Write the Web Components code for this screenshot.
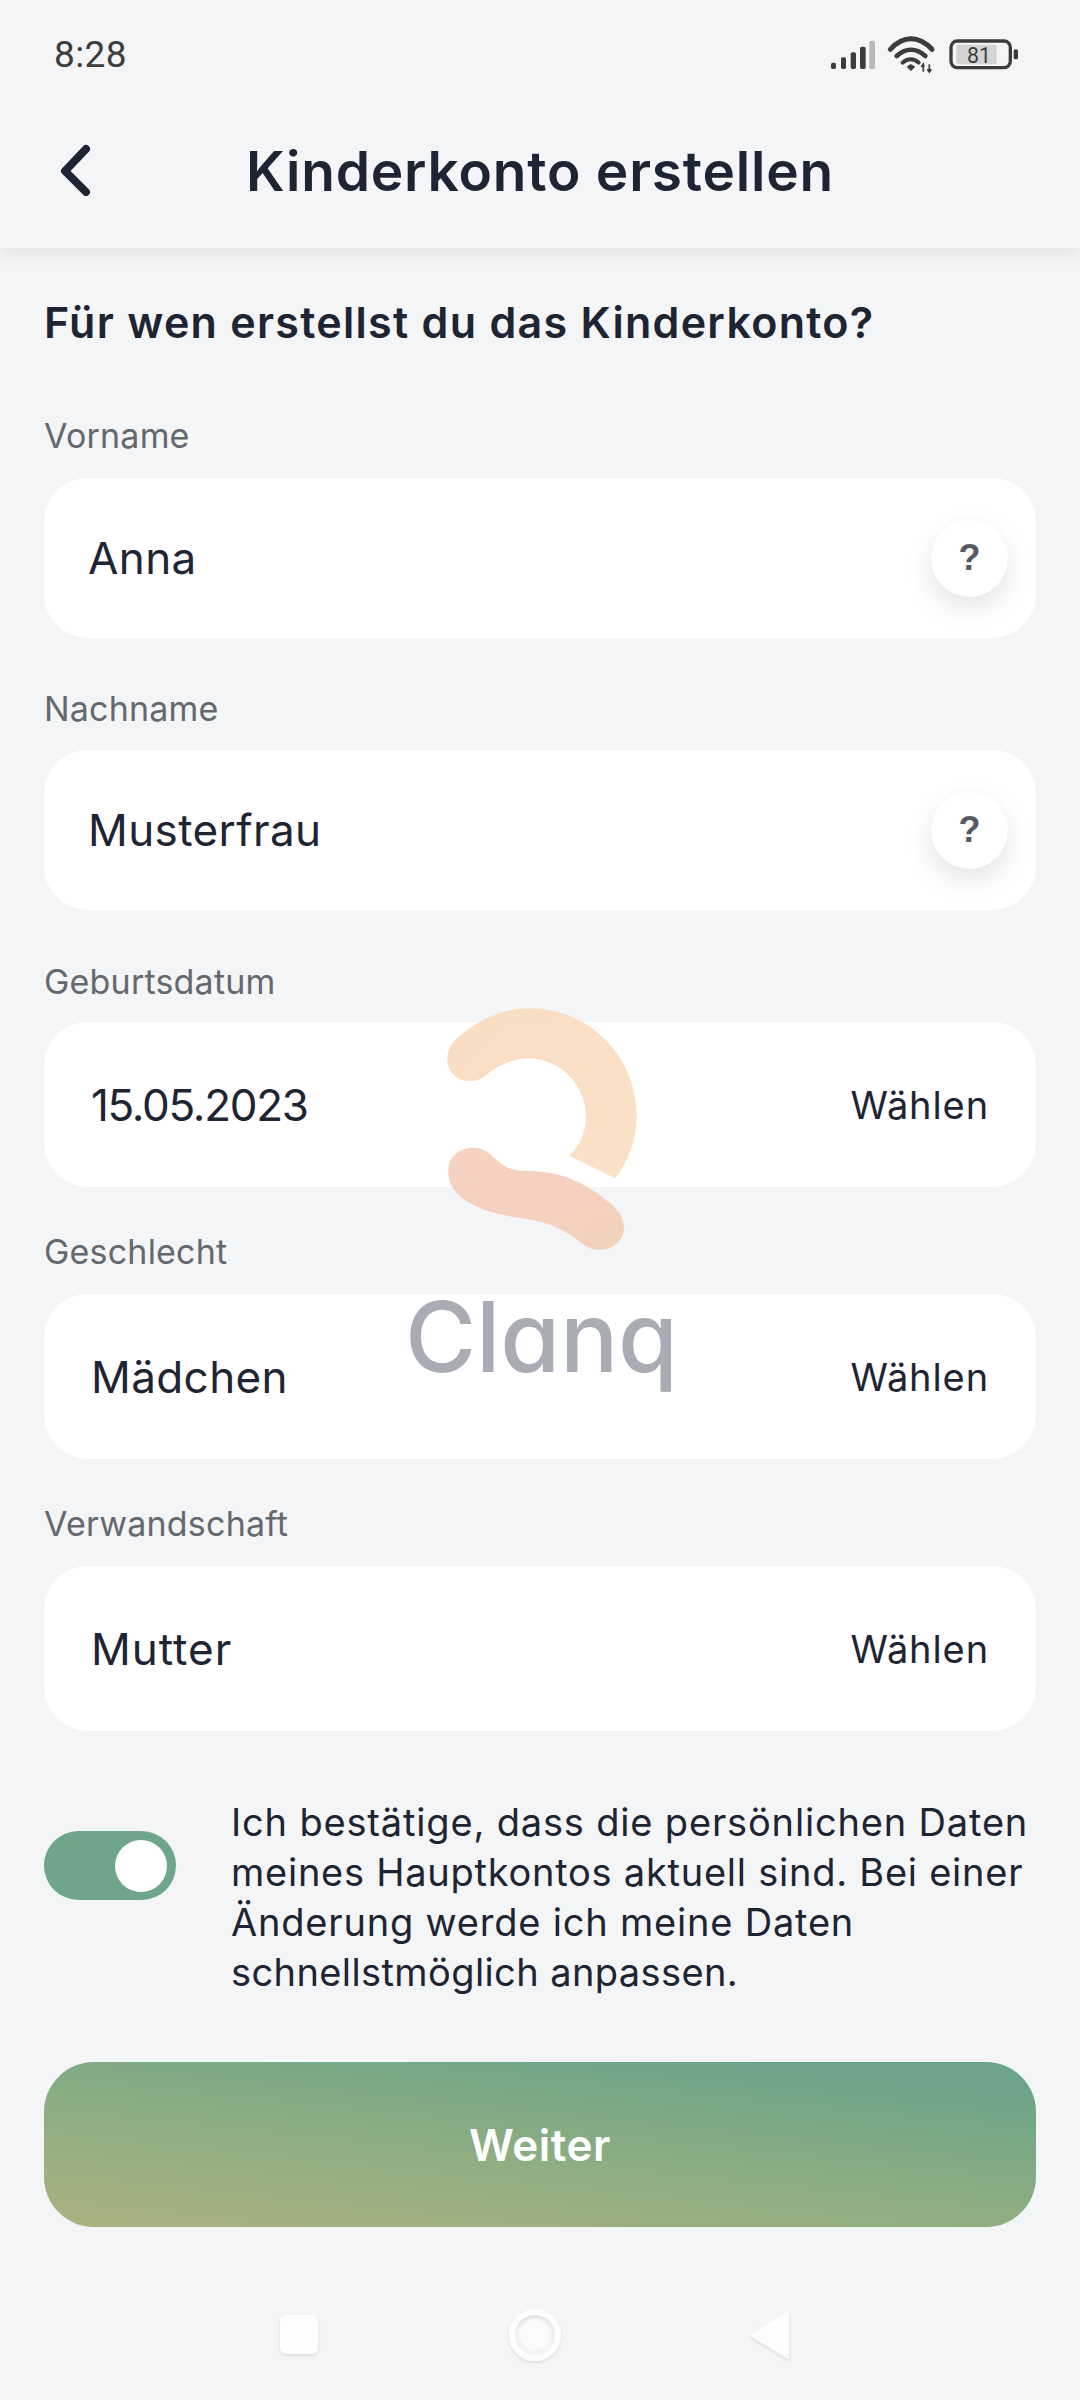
<!DOCTYPE html>
<html lang="de">
<head>
<meta charset="utf-8">
<title>Kinderkonto erstellen</title>
<style>
html,body{margin:0;padding:0;background:#f4f5f6;}
body{width:1080px;height:2400px;position:relative;overflow:hidden;font-family:Inter,"Noto Sans",sans-serif;color:#1d2433;font-feature-settings:"cv11" 1;}
</style>
</head>
<body>
<kc-status time="8:28"></kc-status>
<kc-header>Kinderkonto erstellen</kc-header>
<kc-form>
  <kc-question slot="q">Für wen erstellst du das Kinderkonto?</kc-question>
  <kc-field label="Vorname" help gap="50" mb="22">Anna</kc-field>
  <kc-field label="Nachname" help gap="51" mb="21">Musterfrau</kc-field>
  <kc-field label="Geburtsdatum" action="Wählen" gap="52" mb="20" ls="-1.3">15.05.2023</kc-field>
  <kc-field label="Geschlecht" action="Wählen" gap="45" mb="22">Mädchen</kc-field>
  <kc-field label="Verwandschaft" action="Wählen" gap="45" mb="22" ls="1">Mutter</kc-field>
  <kc-consent><span style="letter-spacing:.83px">Ich bestätige, dass die persönlichen Daten</span><br><span style="letter-spacing:.75px">meines Hauptkontos aktuell sind. Bei einer</span><br><span style="letter-spacing:.8px">Änderung werde ich meine Daten</span><br><span style="letter-spacing:.4px">schnellstmöglich anpassen.</span></kc-consent>
  <kc-button>Weiter</kc-button>
</kc-form>
<kc-nav></kc-nav>
<kc-watermark></kc-watermark>
<script>
function def(name, html, init){
  customElements.define(name, class extends HTMLElement{
    constructor(){super();this.attachShadow({mode:'open'});}
    connectedCallback(){this.shadowRoot.innerHTML = typeof html==='function'?html(this):html; if(init)init(this);}
  });
}
def('kc-status', el=>`<style>
:host{display:flex;justify-content:space-between;height:110px;box-sizing:border-box;padding:20px 40px 0 54px;background:#f4f5f6;}
.t{font:400 37px/70px Roboto,sans-serif;color:#3d3d3d;height:70px;letter-spacing:.4px;}
svg{display:block;}
</style>
<span class="t">${el.getAttribute('time')}</span>
<svg width="260" height="60" viewBox="0 0 780 180">
<g fill="#3c3c3c">
<rect x="153" y="128" width="15" height="19" rx="5"/>
<rect x="183" y="112" width="15" height="35" rx="5"/>
<rect x="212" y="97" width="16" height="50" rx="5"/>
<rect x="240" y="80" width="17" height="67" rx="5"/>
<rect x="268" y="62" width="17" height="85" rx="5" fill="#b8b8b8"/>
</g>
<g fill="none" stroke="#3c3c3c" stroke-linecap="round">
<path d="M331 88C370 46 416 46 456 88" stroke-width="15"/>
<path d="M350 108C376 83 410 83 436 108" stroke-width="14"/>
<path d="M368 128C382 114 402 114 416 128" stroke-width="12"/>
</g>
<path d="M380 140L392 132L406 140L393 153Z" fill="#3c3c3c"/>
<path d="M430 155V134M424 141L430 132L432 140M448 133V155M442 148L448 156L454 148" fill="none" stroke="#3c3c3c" stroke-width="5"/>
<rect x="513" y="63" width="178" height="80" rx="19" fill="none" stroke="#3c3c3c" stroke-width="10"/>
<rect x="529" y="74" width="121" height="59" rx="6" fill="#d4d4d4"/>
<rect x="701" y="88" width="13" height="30" rx="5" fill="#3c3c3c"/>
<text x="597" y="128" text-anchor="middle" font-family="Roboto,sans-serif" font-size="64" fill="#3c3c3c">81</text>
</svg>`);
def('kc-header', `<style>
:host{display:block;position:relative;height:138px;background:#f4f5f6;box-shadow:0 6px 14px rgba(60,65,75,.09);clip-path:inset(0 0 -40px 0);}
.b{position:absolute;left:55px;top:34px;display:block;}
h1{margin:0;text-align:center;font:600 55px/64px Inter,"Noto Sans",sans-serif;padding-top:29px;color:#1d2433;font-feature-settings:"cv11" 1;letter-spacing:.8px;}
</style>
<svg class="b" width="40" height="52" viewBox="0 0 40 52"><path d="M31 5L10 27L31 48" fill="none" stroke="#1d2433" stroke-width="8" stroke-linecap="round" stroke-linejoin="round"/></svg>
<h1><slot></slot></h1>`);
def('kc-form', `<style>
:host{display:flex;flex-direction:column;padding:0 44px;}
</style><slot name="q"></slot><slot></slot>`);
def('kc-question', `<style>
:host{display:block;font:600 43px/54px Inter,"Noto Sans",sans-serif;color:#1d2433;height:54px;padding:47px 0 17px;letter-spacing:1.28px;white-space:nowrap;}
</style><slot></slot>`);
def('kc-field', el=>{
  const h=el.hasAttribute('help'),a=el.getAttribute('action');
  return `<style>
:host{display:block;margin-top:${el.getAttribute('gap')}px;}
.l{font:400 34px/40px Inter,"Noto Sans",sans-serif;color:#64686f;letter-spacing:.2px;margin-bottom:${el.getAttribute('mb')}px;}
.f{background:#fff;border-radius:44px;height:${h?160:165}px;display:flex;align-items:center;justify-content:space-between;box-sizing:border-box;padding:0 ${h?28:47}px 0 ${h?44:47}px;}
.v{font:400 44px/54px Inter,"Noto Sans",sans-serif;color:#1d2433;letter-spacing:${el.getAttribute('ls')||'.4'}px;}
.a{font:400 38px/46px Inter,"Noto Sans",sans-serif;color:#1d2433;letter-spacing:.9px;}
.q{width:77px;height:77px;border-radius:50%;background:#fff;box-shadow:0 10px 24px rgba(60,65,75,.14);display:flex;align-items:center;justify-content:center;font:700 36px/40px "Liberation Sans",sans-serif;color:#555a64;}
</style>
<div class="l">${el.getAttribute('label')}</div>
<div class="f"><span class="v"><slot></slot></span>${h?'<span class="q">?</span>':`<span class="a">${a}</span>`}</div>`;
});
def('kc-consent', `<style>
:host{display:flex;align-items:flex-start;margin-top:66px;}
.t{width:132px;height:69px;border-radius:35px;background:#6fa689;flex:none;margin:34px 55px 0 0;display:flex;align-items:center;justify-content:flex-end;padding-right:9px;box-sizing:border-box;}
.k{width:52px;height:52px;border-radius:50%;background:#fff;}
.x{font:400 38px/50px Inter,"Noto Sans",sans-serif;color:#1d2433;white-space:nowrap;}
</style>
<span class="t"><span class="k"></span></span>
<div class="x"><slot></slot></div>`);
def('kc-button', `<style>
:host{display:flex;align-items:center;justify-content:center;margin-top:65px;height:165px;border-radius:50px;background:linear-gradient(6deg,#a9b280 0%,#8fae82 42%,#6ba488 90%);font:600 44px/54px Inter,"Noto Sans",sans-serif;color:#fff;letter-spacing:.5px;}
</style><slot></slot>`);
def('kc-nav', `<style>
:host{position:absolute;left:0;top:2290px;width:1080px;height:90px;display:block;}
svg{display:block;}
</style>
<svg width="1080" height="90" viewBox="0 0 1080 90">
<defs><filter id="s" x="-30%" y="-30%" width="160%" height="160%"><feDropShadow dx="0" dy="2" stdDeviation="1.5" flood-color="#000" flood-opacity=".1"/></filter></defs>
<rect x="280" y="25" width="38" height="39" rx="6" fill="#fdfdfd" filter="url(#s)"/>
<circle cx="535" cy="45" r="23" fill="none" stroke="#fdfdfd" stroke-width="6" filter="url(#s)"/>
<circle cx="535" cy="45" r="15" fill="#fbfbfb"/>
<path d="M788 22V68L751 45Z" fill="#fdfdfd" stroke="#fdfdfd" stroke-width="2" stroke-linejoin="round" filter="url(#s)"/>
</svg>`);
def('kc-watermark', `<style>
:host{position:absolute;left:380px;top:980px;width:320px;height:420px;display:block;pointer-events:none;}
svg{position:absolute;left:0;top:0;}
.c{position:absolute;left:25px;top:298px;font:500 97px/118px Inter,"Noto Sans",sans-serif;color:#a9acb4;font-feature-settings:"cv11" 1;letter-spacing:-.2px;}
</style>
<svg width="320" height="420" viewBox="0 0 960 1260">
<defs>
<linearGradient id="u" x1="0" y1="0" x2="1" y2="1"><stop offset="0" stop-color="#f8dcc0"/><stop offset="1" stop-color="#fadfc4"/></linearGradient>
<linearGradient id="l" x1="0" y1="0" x2="1" y2="1"><stop offset="0" stop-color="#f5d0c0"/><stop offset="1" stop-color="#f2d0b9"/></linearGradient>
</defs>
<path fill="url(#u)" opacity=".96" d="M225 180C300 110 380 85 450 85C630 85 770 230 770 410C770 480 745 545 705 595L568 527C600 495 618 455 618 410C618 315 540 235 445 235C405 235 365 250 325 280C300 305 270 308 245 300C200 285 185 225 225 180Z"/>
<path fill="url(#l)" opacity=".96" d="M205 570C205 530 240 503 280 503C310 503 330 520 350 540C375 562 400 572 440 573C530 572 610 600 690 670C730 700 745 745 720 780C695 815 640 820 605 790C570 760 530 738 480 725C420 710 340 710 270 670C225 645 203 610 205 570Z"/>
</svg>
<div class="c">Clanq</div>`);
</script>
</body>
</html>
